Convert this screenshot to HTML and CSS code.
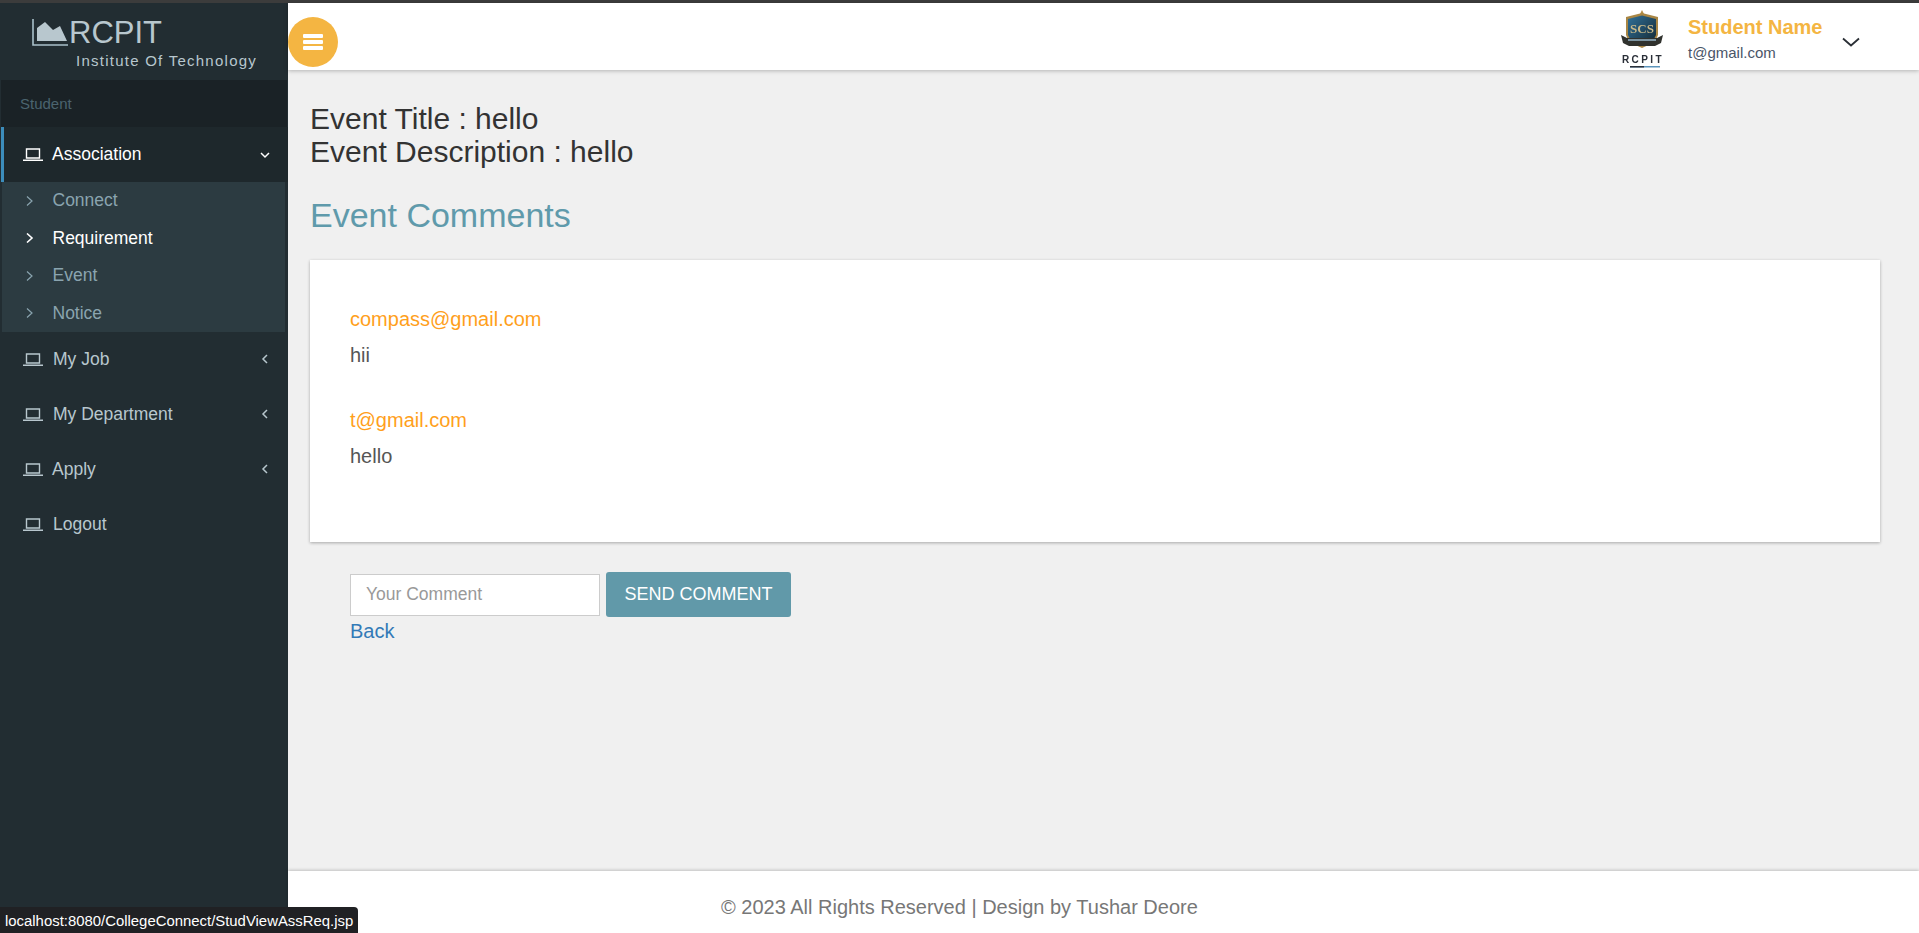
FILE: index.html
```html
<!DOCTYPE html>
<html lang="en">
<head>
<meta charset="utf-8">
<title>Event Comments</title>
<link rel="stylesheet" href="styles.css">
</head>
<body>
<svg class="defs" width="0" height="0" aria-hidden="true">
  <symbol id="laptop" viewBox="0 0 20 14">
    <path d="M3.5 1h13v9h-13z" fill="none" stroke="currentColor" stroke-width="1.4"/>
    <path d="M0 11.5h20v1.5H0z" fill="currentColor"/>
  </symbol>
</svg>
<div class="strip"></div>
<div class="shell">
  <aside class="sidebar">
    <div class="brand">
      <div class="brand-top">
        <svg class="brand-icon" viewBox="0 0 36 27"><path d="M1 0v26h35" fill="none" stroke="#a9c0ca" stroke-width="1.600"/><path d="M5 22V9l8-6 8 8 7-4 7 15z" fill="#b8c7ce"/></svg>
        <span class="brand-name">RCPIT</span>
      </div>
      <div class="brand-sub">Institute Of Technology</div>
    </div>
    <div class="role">Student</div>
    <nav>
      <a class="item open"><svg class="lap"><use href="#laptop"/></svg><span>Association</span>
        <svg class="chev" viewBox="0 0 10 10"><path d="M1 3l4 4 4-4" fill="none" stroke="currentColor" stroke-width="1.500"/></svg></a>
      <div class="sub">
        <a class="sub-item"><svg class="gt" viewBox="0 0 8 10"><path d="M1 .5L6 5 1 9.500" fill="none" stroke="currentColor" stroke-width="1.200"/></svg>Connect</a>
        <a class="sub-item on"><svg class="gt" viewBox="0 0 8 10"><path d="M1 .5L6 5 1 9.500" fill="none" stroke="currentColor" stroke-width="1.600"/></svg>Requirement</a>
        <a class="sub-item"><svg class="gt" viewBox="0 0 8 10"><path d="M1 .5L6 5 1 9.500" fill="none" stroke="currentColor" stroke-width="1.200"/></svg>Event</a>
        <a class="sub-item"><svg class="gt" viewBox="0 0 8 10"><path d="M1 .5L6 5 1 9.500" fill="none" stroke="currentColor" stroke-width="1.200"/></svg>Notice</a>
      </div>
      <a class="item"><svg class="lap"><use href="#laptop"/></svg><span>My Job</span>
        <svg class="chev up" viewBox="0 0 10 10"><path d="M7 1L3 5l4 4" fill="none" stroke="currentColor" stroke-width="1.500"/></svg></a>
      <a class="item"><svg class="lap"><use href="#laptop"/></svg><span>My Department</span>
        <svg class="chev up" viewBox="0 0 10 10"><path d="M7 1L3 5l4 4" fill="none" stroke="currentColor" stroke-width="1.500"/></svg></a>
      <a class="item tight"><svg class="lap"><use href="#laptop"/></svg><span>Apply</span>
        <svg class="chev up" viewBox="0 0 10 10"><path d="M7 1L3 5l4 4" fill="none" stroke="currentColor" stroke-width="1.500"/></svg></a>
      <a class="item"><svg class="lap"><use href="#laptop"/></svg><span>Logout</span></a>
    </nav>
  </aside>
  <div class="main">
    <header class="topbar">
      <button class="burger" aria-label="Menu"><span></span><span></span><span></span></button>
      <div class="user">
        <svg class="crest" viewBox="0 0 48 58">
          <defs>
            <linearGradient id="shield" x1="0" y1="0" x2="1" y2="1">
              <stop offset="0" stop-color="#2f7099"/>
              <stop offset="1" stop-color="#14262f"/>
            </linearGradient>
          </defs>
          <path d="M24 0l2 4h-4z" fill="#b58d45"/>
          <path d="M8 7l16-4 16 4v18l-3 7-13 6-13-6-3-7z" fill="#a98644"/>
          <path d="M10 9l14-3.500L38 9v16l-3 6-11 5-11-5-3-6z" fill="url(#shield)"/>
          <text class="crest-mark" x="24" y="23" text-anchor="middle">SCS</text>
          <path d="M3 25l6 3h30l6-3-2 8-6 3H11l-6-3z" fill="#30322e"/>
          <path d="M10 29h28v2H10z" fill="#7d95a2"/>
          <text class="crest-name" x="25" y="52.500" text-anchor="middle">RCPIT</text>
          <path d="M12 56h30v1.500H12z" fill="#5b93bb"/>
          <path d="M12 56h14v1.500H12z" fill="#2a2f38"/>
        </svg>
        <div class="who">
          <div class="who-name">Student Name</div>
          <div class="who-mail">t@gmail.com</div>
        </div>
        <svg class="user-chev" viewBox="0 0 18 10"><path d="M1 1.500L9 8.500l8-7" fill="none" stroke="#2a2f35" stroke-width="1.800"/></svg>
      </div>
    </header>
    <main class="content">
      <h4 class="event-line">Event Title : hello<br>Event Description : hello</h4>
      <h3 class="comments-title">Event Comments</h3>
      <section class="card">
        <div class="comment"><div class="author">compass@gmail.com</div><div class="text">hii</div></div>
        <div class="comment"><div class="author">t@gmail.com</div><div class="text">hello</div></div>
      </section>
      <form class="reply">
        <div class="reply-row">
          <input class="field" type="text" placeholder="Your Comment">
          <button class="send" type="button">SEND COMMENT</button>
        </div>
        <a class="back">Back</a>
      </form>
    </main>
    <footer class="footer">© 2023 All Rights Reserved | Design by Tushar Deore</footer>
  </div>
</div>
<div class="status">localhost:8080/CollegeConnect/StudViewAssReq.jsp</div>
</body>
</html>
```
FILE: styles.css
```css
* { box-sizing: border-box; }
html, body { height: 100%; }
body {
  margin: 0;
  display: flex;
  flex-direction: column;
  overflow: hidden;
  font-family: "Liberation Sans", Arial, sans-serif;
  font-size: 18px;
  color: #333;
  background: #f0f0f0;
}
.defs { position: absolute; }
.strip { height: 3px; background: #3c3c3c; flex: none; }
.shell { flex: 1; display: flex; min-height: 0; }

.sidebar { width: 288px; flex: none; background: #222d32; color: #b8c7ce; }
.brand { height: 77px; padding: 16px 0 0 32px; background: #222d32; }
.brand-top { display: flex; align-items: center; height: 27px; }
.brand-icon { width: 36px; height: 27px; flex: none; }
.brand-name { font-size: 31px; line-height: 27px; margin-left: 1px; color: #b8c7ce; }
.brand-sub { margin: 7px 0 0 44px; font-size: 15px; line-height: 16px; letter-spacing: 1.250px; color: #b8c7ce; white-space: nowrap; }
.role { height: 47px; margin: 0 1px; padding: 0 0 0 19px; line-height: 47px; font-size: 15px; color: #4b646f; background: #1a2226; }
nav { display: block; }
.item { display: flex; align-items: center; height: 55px; padding-left: 23px; font-size: 17.500px; color: #b8c7ce; }
.item.open { color: #fff; background: #1e282c; border-left: 3px solid #3c8dbc; margin-left: 1px; padding-left: 19px; }
.item.open .lap, .item.tight .lap { margin-right: 9px; }
.lap { width: 20px; height: 14px; margin-right: 10px; flex: none; }
.item span { flex: 1; }
.chev { width: 10px; height: 10px; margin-right: 18px; flex: none; }
.chev.up { margin-bottom: 2px; }
.sub { margin: 0 3px 0 2px; padding: 0; background: #2c3b41; height: 150px; display: flex; flex-direction: column; }
.sub-item { display: flex; align-items: center; height: 37.5px; padding-left: 24px; font-size: 17.500px; color: #8aa4af; }
.sub-item:first-child { margin-top: -.25px; }
.sub-item.on { color: #fff; }
.gt { width: 8px; height: 10px; margin-right: 18.500px; flex: none; }

.main { flex: 1; min-width: 0; display: flex; flex-direction: column; }
.topbar { height: 67px; flex: none; display: flex; align-items: center; justify-content: space-between; background: #fff; box-shadow: 0 1px 4px rgba(0,0,0,.25); position: relative; }
.burger { width: 50px; height: 50px; padding: 0; border: 0; border-radius: 50%; background: #f4b542; display: flex; flex-direction: column; align-items: center; justify-content: center; gap: 2px; margin-top: 11px; }
.burger span { display: block; width: 20px; height: 4px; background: #fff; border-radius: 1px; }
.user { display: flex; align-items: center; margin-right: 59px; }
.crest { width: 48px; height: 58px; flex: none; margin-top: 5px; filter: blur(.4px); }
.crest-mark { font: 700 13px "Liberation Serif", serif; fill: #c9b98a; }
.crest-name { font: 700 10px "Liberation Sans", Arial, sans-serif; letter-spacing: 2.400px; fill: #2a2f38; }
.who { margin: 5px 0 0 22px; width: 154px; }
.who-name { font-size: 20px; font-weight: 700; line-height: 22px; color: #f4b542; }
.who-mail { font-size: 15px; line-height: 18px; margin-top: 6px; color: #4a5568; }
.user-chev { width: 18px; height: 10px; flex: none; margin-top: 10px; }

.content { flex: 1; min-height: 0; padding: 32px 39px 0 22px; }
.event-line { margin: 0; font-size: 30px; font-weight: 400; line-height: 33px; color: #333; }
.comments-title { margin: 29px 0 0; font-size: 34px; font-weight: 400; line-height: 36px; color: #5f9aab; }
.card { margin-top: 27px; height: 282px; padding: 48px 40px 0; background: #fff; box-shadow: 0 1px 3px rgba(0,0,0,.3); }
.comment { margin-bottom: 43px; }
.author { font-size: 20px; line-height: 22px; color: #ff9f1c; }
.text { font-size: 20px; line-height: 22px; margin-top: 14px; color: #555; }
.reply { margin: 30px 0 0 40px; }
.reply-row { display: flex; align-items: center; gap: 6px; }
.field { width: 250px; height: 42px; padding: 0 15px; border: 1px solid #ccc; background: #fff; font: 17.500px "Liberation Sans", Arial, sans-serif; }
.field::placeholder { color: #999; opacity: 1; }
.send { width: 185px; height: 45px; padding: 0; border: 0; border-radius: 3px; background: #6199a9; color: #fff; font: 18px "Liberation Sans", Arial, sans-serif; }
.back { display: block; font-size: 20px; line-height: 22px; margin-top: 3px; color: #337ab7; }

.footer { height: 62px; flex: none; padding: 24px 0 0 433px; background: #fff; box-shadow: 0 -1px 3px rgba(0,0,0,.2); position: relative; font-size: 20px; line-height: 24px; color: #777; }

.status { position: fixed; left: 0; bottom: 0; height: 26px; padding: 0 5px; line-height: 28px; font-size: 14.900px; color: #fff; background: #202124; border-top-right-radius: 4px; }
```
